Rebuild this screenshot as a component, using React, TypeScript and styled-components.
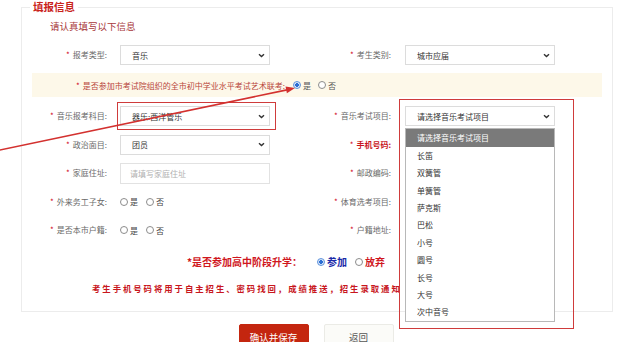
import React from "react";
import styled, { createGlobalStyle } from "styled-components";

const GlobalStyle = createGlobalStyle`
  *, *::before, *::after { box-sizing: border-box; }
  html, body { margin: 0; padding: 0; background: #fff; }
  body { font-family: "Noto Sans CJK SC", "Noto Sans", sans-serif; }
`;

const Page = styled.div`
  position: relative;
  width: 632px;
  height: 342px;
  overflow: hidden;
  background: #fff;
`;

const Fieldset = styled.fieldset`
  margin: 0 0 0 21px;
  padding: 0;
  width: 592px;
  height: 312px;
  min-width: 0;
  border: 1px solid #ececec;
`;

const Legend = styled.legend`
  margin-left: 8px;
  padding: 0 3px;
  font-size: 10.5px;
  line-height: 14px;
  font-weight: 700;
  color: #c9231b;
`;

const Subtitle = styled.div`
  margin-top: 5px;
  padding-left: 28px;
  font-size: 9.5px;
  line-height: 14px;
  color: #a8383a;
`;

const FormRow = styled.div<{ $h?: number; $mt?: number }>`
  display: grid;
  grid-template-columns: 98px 150px 135px 150px;
  align-items: center;
  height: ${(p) => p.$h ?? 28.5}px;
  margin-top: ${(p) => p.$mt ?? 0}px;
`;

const Label = styled.div<{ $gap: number; $strong?: boolean }>`
  display: flex;
  justify-content: flex-end;
  align-items: center;
  padding-right: ${(p) => p.$gap}px;
  font-size: 8px;
  line-height: 12px;
  white-space: nowrap;
  color: ${(p) => (p.$strong ? "#c8161d" : "#6a6a6a")};
  font-weight: ${(p) => (p.$strong ? 700 : 400)};
`;

const Star = styled.span`
  color: #d0021b;
  margin-right: 3px;
  font-weight: 400;
`;

const Cell = styled.div`
  position: relative;
  display: flex;
  align-items: center;
`;

const SelectBox = styled.div`
  width: 150px;
  height: 20px;
  border: 1px solid #dcdcdc;
  background: #fff;
  display: flex;
  align-items: center;
  justify-content: space-between;
  padding: 0 4px 0 11px;
  font-size: 8px;
  color: #333;
  white-space: nowrap;
`;

const InputBox = styled.div`
  width: 150px;
  height: 21px;
  border: 1px solid #e2e2e2;
  background: #fff;
  display: flex;
  align-items: center;
  padding-left: 9px;
  font-size: 8px;
  color: #b0b0b0;
  white-space: nowrap;
`;

const Chevron = () => (
  <svg width="7" height="5" viewBox="0 0 7 5">
    <path d="M1 1.2 L3.5 3.6 L6 1.2" fill="none" stroke="#333" strokeWidth="1.4" />
  </svg>
);

const Band = styled.div`
  margin: 4px 10px 0 10px;
  height: 24px;
  background: #fdf8e9;
  display: flex;
  align-items: center;
  padding-left: 44px;
  font-size: 8px;
  color: #b9473c;
  white-space: nowrap;
`;

const RadioGroup = styled.div<{ $gap?: number }>`
  display: flex;
  align-items: center;
  gap: ${(p) => p.$gap ?? 8}px;
`;

const RadioItem = styled.span<{ $color?: string; $bold?: boolean; $size?: number }>`
  display: inline-flex;
  align-items: center;
  gap: 2px;
  font-size: ${(p) => p.$size ?? 8}px;
  font-weight: ${(p) => (p.$bold ? 700 : 400)};
  color: ${(p) => p.$color ?? "#444"};
  white-space: nowrap;
`;

const RadioDot = styled.span<{ $checked?: boolean }>`
  display: inline-block;
  width: 8px;
  height: 8px;
  border-radius: 50%;
  border: 1px solid ${(p) => (p.$checked ? "#5f93dc" : "#8c8c8c")};
  background: ${(p) =>
    p.$checked
      ? "radial-gradient(circle, #2c6ed3 0 38%, #d6e5f9 48% 100%)"
      : "#fff"};
`;

const DropList = styled.div`
  position: absolute;
  left: 0;
  top: calc(100% + 2px);
  width: 150px;
  background: #fff;
  border: 1px solid #b8b8b8;
  z-index: 3;
`;

const Option = styled.div<{ $active?: boolean }>`
  height: 17.4px;
  display: flex;
  align-items: center;
  padding-left: 11px;
  font-size: 8px;
  color: ${(p) => (p.$active ? "#fff" : "#333")};
  background: ${(p) => (p.$active ? "#7a7a7a" : "#fff")};
  white-space: nowrap;
`;

const UpgradeRow = styled.div`
  margin-top: 7px;
  height: 20px;
  display: flex;
  align-items: center;
  padding-left: 165px;
  gap: 15px;
`;

const UpgradeLabel = styled.span`
  font-size: 10px;
  font-weight: 700;
  color: #d0161d;
  white-space: nowrap;
`;

const Notice = styled.div`
  margin-top: 8px;
  height: 16px;
  display: flex;
  align-items: center;
  padding-left: 70px;
  font-size: 8.4px;
  font-weight: 700;
  letter-spacing: 1.95px;
  color: #c8161d;
  white-space: nowrap;
`;

const Actions = styled.div`
  margin-top: 12px;
  display: flex;
  justify-content: center;
  gap: 15px;
`;

const Button = styled.button<{ $primary?: boolean }>`
  width: 70px;
  height: 26px;
  border-radius: 2px;
  font-family: inherit;
  font-size: 9.5px;
  line-height: 24px;
  border: 1px solid ${(p) => (p.$primary ? "#c4260f" : "#ebebe6")};
  background: ${(p) => (p.$primary ? "#c4260f" : "#fbfbf8")};
  color: ${(p) => (p.$primary ? "#fff" : "#555")};
  padding: 0;
`;

const Mark = styled.div<{ $l: number; $t: number; $w: number; $h: number }>`
  position: absolute;
  left: ${(p) => p.$l}px;
  top: ${(p) => p.$t}px;
  width: ${(p) => p.$w}px;
  height: ${(p) => p.$h}px;
  border: 1.5px solid #cf3b3b;
  pointer-events: none;
  z-index: 4;
`;

const ArrowLayer = styled.svg`
  position: absolute;
  left: 0;
  top: 0;
  pointer-events: none;
  z-index: 5;
`;

const L = ({ text, gap, strong }: { text: string; gap: number; strong?: boolean }) => (
  <Label $gap={gap} $strong={strong}>
    <Star>*</Star>
    {text}
  </Label>
);

const Select = ({ value }: { value: string }) => (
  <SelectBox>
    <span>{value}</span>
    <Chevron />
  </SelectBox>
);

const YesNo = () => (
  <RadioGroup>
    <RadioItem>
      <RadioDot />是
    </RadioItem>
    <RadioItem>
      <RadioDot />否
    </RadioItem>
  </RadioGroup>
);

const options = [
  "请选择音乐考试项目",
  "长笛",
  "双簧管",
  "单簧管",
  "萨克斯",
  "巴松",
  "小号",
  "圆号",
  "长号",
  "大号",
  "次中音号",
];

export default function App() {
  return (
    <Page>
      <GlobalStyle />
      <Fieldset>
        <Legend>填报信息</Legend>
        <Subtitle>请认真填写以下信息</Subtitle>
        <FormRow $h={28} $mt={8}>
          <L text="报考类型:" gap={13} />
          <Cell>
            <Select value="音乐" />
          </Cell>
          <L text="考生类别:" gap={14} />
          <Cell>
            <Select value="城市应届" />
          </Cell>
        </FormRow>
        <Band>
          <Star>*</Star>
          是否参加市考试院组织的全市初中学业水平考试艺术联考:
          <RadioGroup $gap={7} style={{ marginLeft: 8 }}>
            <RadioItem $color="#555">
              <RadioDot $checked />是
            </RadioItem>
            <RadioItem $color="#555">
              <RadioDot />否
            </RadioItem>
          </RadioGroup>
        </Band>
        <FormRow $mt={5}>
          <L text="音乐报考科目:" gap={13} />
          <Cell>
            <Select value="器乐:西洋管乐" />
          </Cell>
          <L text="音乐考试项目:" gap={14} />
          <Cell>
            <Select value="请选择音乐考试项目" />
            <DropList>
              {options.map((o, i) => (
                <Option key={o} $active={i === 0}>
                  {o}
                </Option>
              ))}
            </DropList>
          </Cell>
        </FormRow>
        <FormRow>
          <L text="政治面目:" gap={13} />
          <Cell>
            <Select value="团员" />
          </Cell>
          <L text="手机号码:" gap={14} strong />
          <Cell>
            <InputBox />
          </Cell>
        </FormRow>
        <FormRow>
          <L text="家庭住址:" gap={13} />
          <Cell>
            <InputBox>请填写家庭住址</InputBox>
          </Cell>
          <L text="邮政编码:" gap={14} />
          <Cell>
            <InputBox />
          </Cell>
        </FormRow>
        <FormRow>
          <L text="外来务工子女:" gap={13} />
          <Cell>
            <YesNo />
          </Cell>
          <L text="体育选考项目:" gap={14} />
          <Cell>
            <InputBox />
          </Cell>
        </FormRow>
        <FormRow>
          <L text="是否本市户籍:" gap={13} />
          <Cell>
            <YesNo />
          </Cell>
          <L text="户籍地址:" gap={14} />
          <Cell>
            <InputBox />
          </Cell>
        </FormRow>
        <UpgradeRow>
          <UpgradeLabel>*是否参加高中阶段升学：</UpgradeLabel>
          <RadioGroup $gap={8}>
            <RadioItem $size={10} $bold $color="#1b2aa8">
              <RadioDot $checked />参加
            </RadioItem>
            <RadioItem $size={10} $bold $color="#d0161d">
              <RadioDot />放弃
            </RadioItem>
          </RadioGroup>
        </UpgradeRow>
        <Notice>考生手机号码将用于自主招生、密码找回，成绩推送，招生录取通知</Notice>
      </Fieldset>
      <Actions>
        <Button $primary>确认并保存</Button>
        <Button>返回</Button>
      </Actions>
      <Mark $l={117} $t={101.5} $w={159} $h={28} />
      <Mark $l={399} $t={99} $w={175} $h={230} />
      <ArrowLayer width="632" height="342" viewBox="0 0 632 342">
        <line x1="-4" y1="150.8" x2="287" y2="89.9" stroke="#d3312f" strokeWidth="1.6" />
        <polygon points="295,88 286.9,93.3 285.5,86.4" fill="#d3312f" />
      </ArrowLayer>
    </Page>
  );
}
